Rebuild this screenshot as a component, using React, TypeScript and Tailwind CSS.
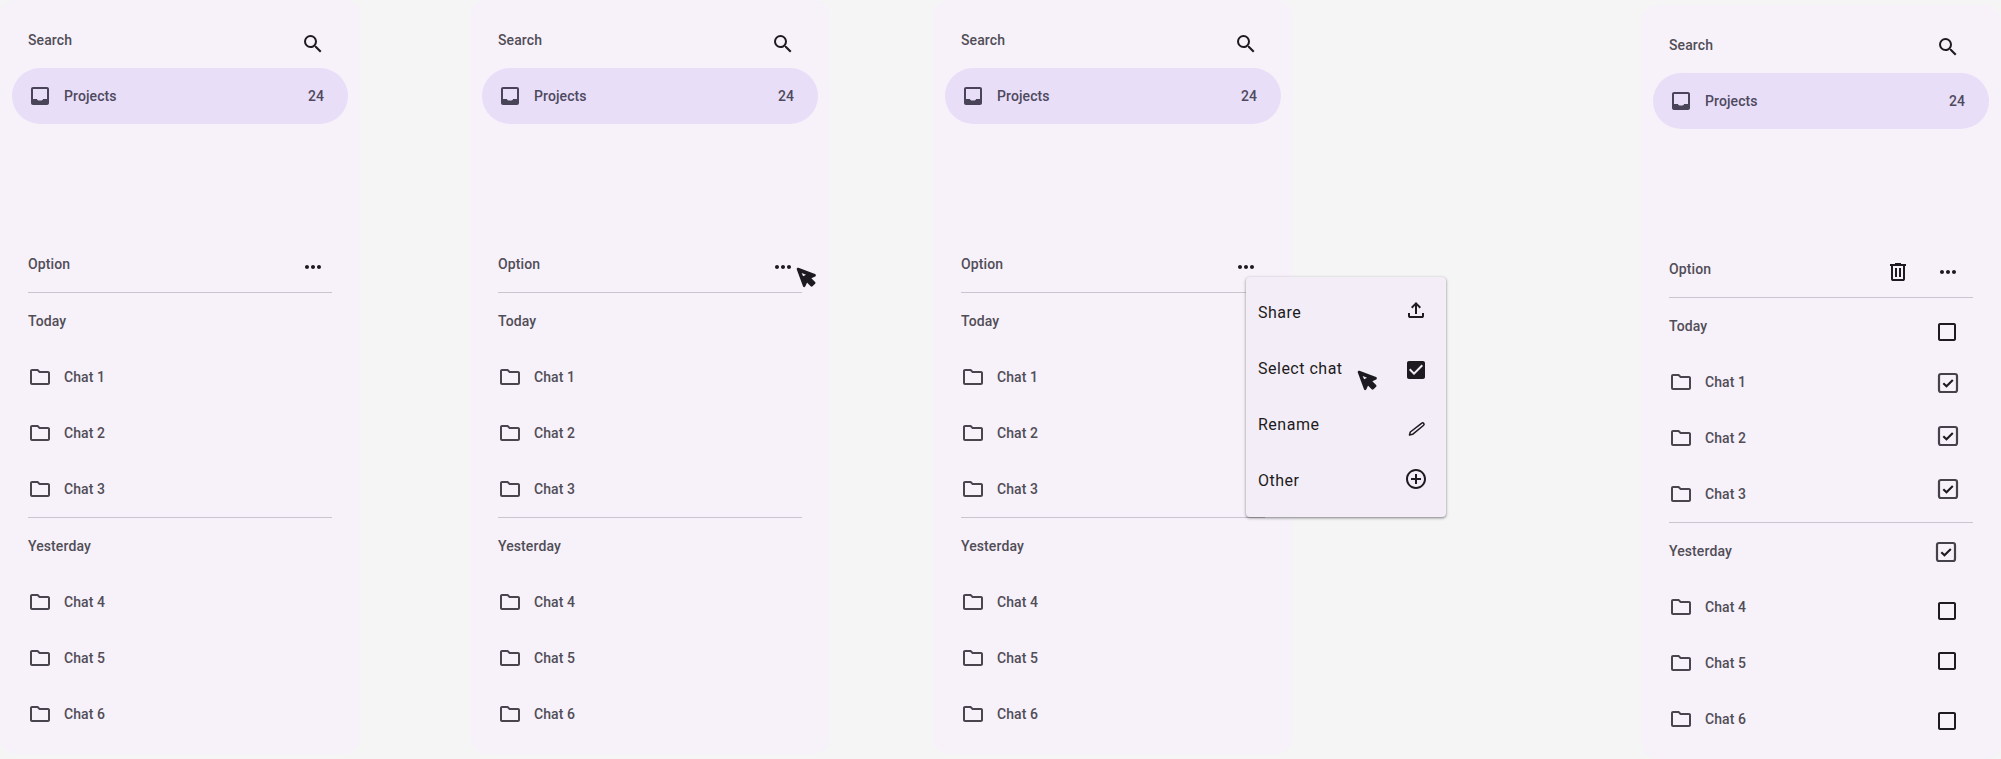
import type { ReactNode } from "react";

const ink = "#1D1B20";

function Icon({ d, color = ink }: { d: string; color?: string }) {
  return (
    <svg width="24" height="24" viewBox="0 0 24 24" fill={color} className="shrink-0">
      <path d={d} />
    </svg>
  );
}

const paths = {
  search:
    "M15.5 14h-.79l-.28-.27A6.471 6.471 0 0 0 16 9.5 6.5 6.5 0 1 0 9.5 16c1.61 0 3.09-.59 4.23-1.57l.27.28v.79l5 4.99L20.49 19l-4.99-5zm-6 0C7.01 14 5 11.99 5 9.5S7.01 5 9.5 5 14 7.01 14 9.5 11.99 14 9.5 14z",
  more: "M6 10c-1.1 0-2 .9-2 2s.9 2 2 2 2-.9 2-2-.9-2-2-2zm12 0c-1.1 0-2 .9-2 2s.9 2 2 2 2-.9 2-2-.9-2-2-2zm-6 0c-1.1 0-2 .9-2 2s.9 2 2 2 2-.9 2-2-.9-2-2-2z",
  folder:
    "M9.17 6l2 2H20v10H4V6h5.17M10 4H4c-1.1 0-1.99.9-1.99 2L2 18c0 1.1.9 2 2 2h16c1.1 0 2-.9 2-2V8c0-1.1-.9-2-2-2h-8l-2-2z",
  upload:
    "M11 16V7.85l-2.6 2.6L7 9l5-5 5 5-1.4 1.45-2.6-2.6V16h-2Zm-5 4q-.825 0-1.413-.587Q4 18.825 4 18v-3h2v3h12v-3h2v3q0 .825-.587 1.413Q18.825 20 18 20H6Z",
  checked:
    "M19 3H5c-1.11 0-2 .9-2 2v14c0 1.1.89 2 2 2h14c1.11 0 2-.9 2-2V5c0-1.1-.89-2-2-2zm-9 14l-5-5 1.41-1.41L10 14.17l7.59-7.59L19 8l-9 9z",
  addCircle:
    "M13 7h-2v4H7v2h4v4h2v-4h4v-2h-4V7zm-1-5C6.48 2 2 6.48 2 12s4.48 10 10 10 10-4.48 10-10S17.52 2 12 2zm0 18c-4.41 0-8-3.59-8-8s3.59-8 8-8 8 3.59 8 8-3.59 8-8 8z",
  blank:
    "M19 5v14H5V5h14m0-2H5c-1.1 0-2 .9-2 2v14c0 1.1.9 2 2 2h14c1.1 0 2-.9 2-2V5c0-1.1-.9-2-2-2z",
  trash:
    "M7 21q-.825 0-1.413-.587Q5 19.825 5 19V6H4V4h5V3h6v1h5v2h-1v13q0 .825-.587 1.413Q17.825 21 17 21H7ZM17 6H7v13h10V6ZM9 17h2V8H9v9Zm4 0h2V8h-2v9Z",
};

function Inbox() {
  return (
    <svg width="24" height="24" viewBox="0 0 24 24" className="shrink-0">
      <path
        fill="#4A4459"
        d="M5 3h14c1.1 0 2 .9 2 2v14c0 1.1-.9 2-2 2H5c-1.1 0-2-.9-2-2V5c0-1.1.9-2 2-2zm0 2v10h4c0 1 1.3 1.6 3 1.6s3-.6 3-1.6h4V5H5z"
      />
    </svg>
  );
}

function Pencil() {
  return (
    <svg width="24" height="24" viewBox="0 0 24 24" fill="none" className="shrink-0">
      <path
        d="M5.5 18 6.3 15 17.5 6.3c.7-.5 1.8-.5 2.3.2.5.7.3 1.5-.4 2L8.6 17.3z"
        stroke={ink}
        strokeWidth="1.5"
        strokeLinejoin="round"
      />
    </svg>
  );
}

function CheckedBox() {
  return (
    <svg width="24" height="24" viewBox="0 0 24 24" fill="none" className="shrink-0">
      <rect x="4" y="3" width="18" height="18" rx="2" stroke="#45424B" strokeWidth="2.2" />
      <path d="M8.3 12.2l3.2 3.1 6.3-6.3" stroke={ink} strokeWidth="2.1" />
    </svg>
  );
}

function Cursor() {
  return (
    <svg width="21" height="22" viewBox="0 0 21 22">
      <path
        d="M2 2 18.6 8.3l-5.4 2.5 5 5-2.6 2.6-5-5-2.4 5.4z"
        fill={ink}
        stroke={ink}
        strokeWidth="2.6"
        strokeLinejoin="round"
      />
      <path d="M5.6 6 10 7.8l-2.8 1.5z" fill="#F3EDF7" />
    </svg>
  );
}

function Row({ children }: { children: ReactNode }) {
  return (
    <div className="flex h-14 items-center justify-between px-4 text-sm font-medium tracking-[0.1px] text-[#514D57]">
      {children}
    </div>
  );
}

function ChatRow({ name, right }: { name: string; right?: ReactNode }) {
  return (
    <Row>
      <div className="flex items-center gap-3">
        <Icon d={paths.folder} color="#49454F" />
        <span>{name}</span>
      </div>
      {right}
    </Row>
  );
}

function Divider() {
  return <div className="mx-4 h-px bg-[#CAC4D0]" />;
}

function Panel({
  selecting = false,
  children,
  className = "",
}: {
  selecting?: boolean;
  children?: ReactNode;
  className?: string;
}) {
  const box = (kind: string) => {
    if (!selecting) return undefined;
    if (kind === "today") return <div className="mt-3 mr-[14px]"><Icon d={paths.blank} /></div>;
    if (kind === "c1") return <div className="mt-[2px] mr-[14px]"><CheckedBox /></div>;
    if (kind === "c2") return <div className="mb-1 mr-[14px]"><CheckedBox /></div>;
    if (kind === "c3") return <div className="mb-[10px] mr-[14px]"><CheckedBox /></div>;
    if (kind === "y") return <div className="mt-[2px] mr-4"><CheckedBox /></div>;
    if (kind === "c4") return <div className="mt-2 mr-[14px]"><Icon d={paths.blank} /></div>;
    if (kind === "c5") return <div className="mb-1 mr-[14px]"><Icon d={paths.blank} /></div>;
    return <div className="mt-1 mr-[14px]"><Icon d={paths.blank} /></div>;
  };

  return (
    <section className={`relative h-[754px] w-[360px] shrink-0 rounded-2xl bg-[#F7F2FA] p-3 ${className}`}>
      <Row>
        <span>Search</span>
        <div className={selecting ? "mt-1 mr-[13px]" : "mt-2 mr-[7px]"}>
          <Icon d={paths.search} />
        </div>
      </Row>
      <div className="flex h-14 items-center justify-between rounded-full bg-[#E8DEF8] pl-4 pr-6 text-sm font-medium tracking-[0.1px] text-[#4F495E]">
        <div className="flex items-center gap-3">
          <Inbox />
          <span>Projects</span>
        </div>
        <span>24</span>
      </div>

      <div className="h-[112px]" />

      <Row>
        <span>Option</span>
        <div className={selecting ? "mt-[6px] mr-[13px] flex items-center gap-[26px]" : "mt-[6px] mr-[7px] flex items-center"}>
          {selecting && <Icon d={paths.trash} />}
          <Icon d={paths.more} />
        </div>
      </Row>
      <Divider />
      <Row>
        <span>Today</span>
        {box("today")}
      </Row>
      <ChatRow name="Chat 1" right={box("c1")} />
      <ChatRow name="Chat 2" right={box("c2")} />
      <ChatRow name="Chat 3" right={box("c3")} />
      <Divider />
      <Row>
        <span>Yesterday</span>
        {box("y")}
      </Row>
      <ChatRow name="Chat 4" right={box("c4")} />
      <ChatRow name="Chat 5" right={box("c5")} />
      <ChatRow name="Chat 6" right={box("c6")} />
      {children}
    </section>
  );
}

const menuItems: { label: string; icon: ReactNode }[] = [
  { label: "Share", icon: <div className="mb-[6px]"><Icon d={paths.upload} /></div> },
  { label: "Select chat", icon: <div className="mt-[2px]"><Icon d={paths.checked} /></div> },
  { label: "Rename", icon: <div className="mt-2"><Pencil /></div> },
  { label: "Other", icon: <div className="mb-1"><Icon d={paths.addCircle} /></div> },
];

function Menu() {
  return (
    <div className="absolute left-[313px] top-[277px] w-[200px] rounded bg-[#F3EDF7] py-2 shadow-[0_1px_3px_1px_rgba(0,0,0,0.15),0_1px_2px_rgba(0,0,0,0.3)]">
      {menuItems.map((item) => (
        <div key={item.label} className="flex h-14 items-center justify-between pl-3 pr-[18px] text-base tracking-[0.5px] text-[#1D1B20]">
          <span>{item.label}</span>
          {item.icon}
        </div>
      ))}
    </div>
  );
}

export default function App() {
  return (
    <div className="flex h-[759px] items-start overflow-hidden bg-[#F5F5F5] font-['Roboto',sans-serif]">
      <Panel />
      <Panel className="ml-[110px]">
        <div className="absolute left-[326px] top-[267px]">
          <Cursor />
        </div>
      </Panel>
      <Panel className="ml-[103px]">
        <Menu />
        <div className="absolute left-[424px] top-[370px]">
          <Cursor />
        </div>
      </Panel>
      <Panel selecting className="ml-[348px] mt-[5px]" />
    </div>
  );
}
